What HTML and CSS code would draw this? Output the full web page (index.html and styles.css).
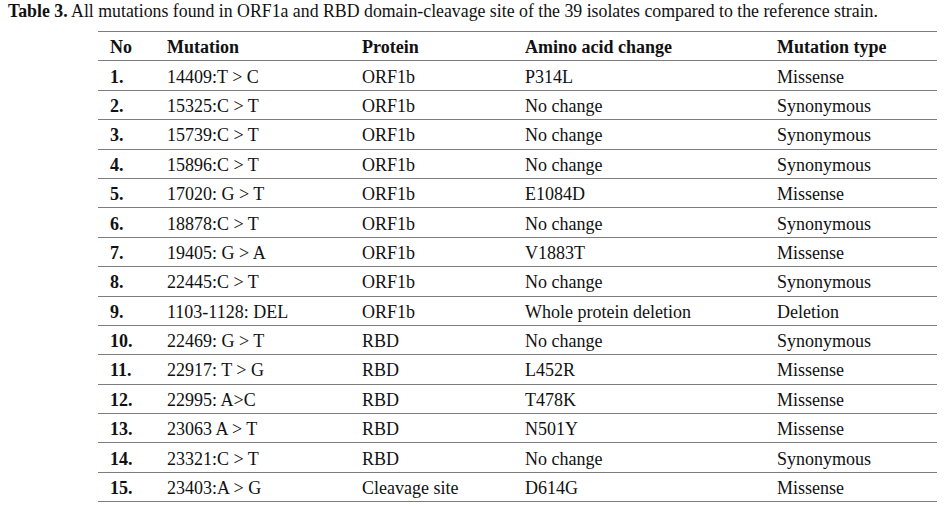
FILE: index.html
```html
<!DOCTYPE html>
<html>
<head>
<meta charset="utf-8">
<link rel="stylesheet" href="styles.css">
</head>
<body>
<p class="caption"><b>Table 3.</b> All mutations found in ORF1a and RBD domain-cleavage site of the 39 isolates compared to the reference strain.</p>
<table class="mut">
<colgroup>
<col class="c-no"><col class="c-mut"><col class="c-prot"><col class="c-aa"><col class="c-type">
</colgroup>
<thead>
<tr><th>No</th><th>Mutation</th><th>Protein</th><th>Amino acid change</th><th>Mutation type</th></tr>
</thead>
<tbody>
<tr><td class="n">1.</td><td>14409:T &gt; C</td><td>ORF1b</td><td>P314L</td><td>Missense</td></tr>
<tr><td class="n">2.</td><td>15325:C &gt; T</td><td>ORF1b</td><td>No change</td><td>Synonymous</td></tr>
<tr><td class="n">3.</td><td>15739:C &gt; T</td><td>ORF1b</td><td>No change</td><td>Synonymous</td></tr>
<tr><td class="n">4.</td><td>15896:C &gt; T</td><td>ORF1b</td><td>No change</td><td>Synonymous</td></tr>
<tr><td class="n">5.</td><td>17020: G &gt; T</td><td>ORF1b</td><td>E1084D</td><td>Missense</td></tr>
<tr><td class="n">6.</td><td>18878:C &gt; T</td><td>ORF1b</td><td>No change</td><td>Synonymous</td></tr>
<tr><td class="n">7.</td><td>19405: G &gt; A</td><td>ORF1b</td><td>V1883T</td><td>Missense</td></tr>
<tr><td class="n">8.</td><td>22445:C &gt; T</td><td>ORF1b</td><td>No change</td><td>Synonymous</td></tr>
<tr><td class="n">9.</td><td>1103-1128: DEL</td><td>ORF1b</td><td>Whole protein deletion</td><td>Deletion</td></tr>
<tr><td class="n">10.</td><td>22469: G &gt; T</td><td>RBD</td><td>No change</td><td>Synonymous</td></tr>
<tr><td class="n">11.</td><td>22917: T &gt; G</td><td>RBD</td><td>L452R</td><td>Missense</td></tr>
<tr><td class="n">12.</td><td>22995: A&gt;C</td><td>RBD</td><td>T478K</td><td>Missense</td></tr>
<tr><td class="n">13.</td><td>23063 A &gt; T</td><td>RBD</td><td>N501Y</td><td>Missense</td></tr>
<tr><td class="n">14.</td><td>23321:C &gt; T</td><td>RBD</td><td>No change</td><td>Synonymous</td></tr>
<tr><td class="n">15.</td><td>23403:A &gt; G</td><td>Cleavage site</td><td>D614G</td><td>Missense</td></tr>
</tbody>
</table>
</body>
</html>
```
FILE: styles.css
```css
html, body {
  margin: 0;
  padding: 0;
  background: #ffffff;
}
body {
  font-family: "Liberation Serif", "Times New Roman", serif;
  color: #111;
  padding: 0 8px;
}
.caption {
  margin: 0;
  padding-top: 1px;
  font-size: 17.8px;
  line-height: 20px;
  white-space: nowrap;
}
.mut {
  margin: 10px 0 0 90px;
  width: 839px;
  border-collapse: collapse;
  table-layout: fixed;
  font-size: 18px;
}
.c-no { width: 57px; }
.c-mut { width: 195px; }
.c-prot { width: 163px; }
.c-aa { width: 252px; }
.c-type { width: 172px; }
.mut th, .mut td {
  text-align: left;
  padding: 2px 0 0 12px;
  height: 26.4px;
  line-height: 20px;
  border-top: 1.5px solid #7d7d7d;
  border-bottom: 1.5px solid #7d7d7d;
  white-space: nowrap;
  vertical-align: middle;
}
.mut th { font-weight: bold; }
.mut td.n { font-weight: bold; }
```
